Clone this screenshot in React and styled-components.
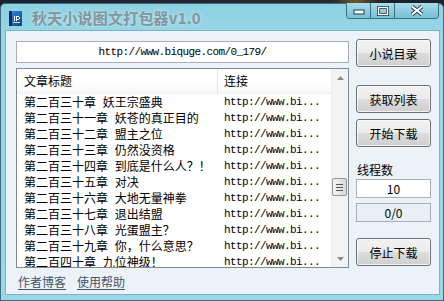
import React from "react";
import styled, { createGlobalStyle } from "styled-components";

const GlobalStyle = createGlobalStyle`
  html, body {
    margin: 0;
    padding: 0;
    background: #1d2430;
  }
  * {
    box-sizing: border-box;
  }
`;

const cjk = `"Noto Sans CJK SC", "Noto Sans", sans-serif`;
const mono = `"Liberation Mono", "DejaVu Sans Mono", monospace`;

const chapters = [
  "第二百三十章 妖王宗盛典",
  "第二百三十一章 妖苍的真正目的",
  "第二百三十二章 盟主之位",
  "第二百三十三章 仍然没资格",
  "第二百三十四章 到底是什么人？！",
  "第二百三十五章 对决",
  "第二百三十六章 大地无量神拳",
  "第二百三十七章 退出结盟",
  "第二百三十八章 光蛋盟主？",
  "第二百三十九章 你，什么意思？",
  "第二百四十章 九位神级！",
];

function AppIcon() {
  return (
    <svg width="13" height="15" viewBox="0 0 13 15">
      <defs>
        <linearGradient id="ic" x1="0" y1="0" x2="1" y2="1">
          <stop offset="0" stopColor="#3a8fd6" />
          <stop offset="1" stopColor="#0d3f86" />
        </linearGradient>
      </defs>
      <rect x="0" y="0" width="13" height="15" fill="url(#ic)" />
      <rect x="0" y="0" width="3" height="15" fill="#0a2f66" />
      <path d="M5 5h1v5h-1z M7 5h3v1h1v2h-1v1h-2v1h-1z M8 6v2h2v-2z" fill="#fff" />
      <rect x="4" y="11" width="7" height="1" fill="#cfe6ff" />
    </svg>
  );
}

function MinGlyph() {
  return (
    <svg width="12" height="8" viewBox="0 0 12 8">
      <rect x="1" y="3" width="10" height="4" fill="#fff" stroke="#203a48" strokeWidth="1" />
    </svg>
  );
}

function MaxGlyph() {
  return (
    <svg width="12" height="10" viewBox="0 0 12 10">
      <rect x="1.5" y="1.5" width="9" height="7" fill="none" stroke="#203a48" strokeWidth="3" />
      <rect x="1.5" y="1.5" width="9" height="7" fill="none" stroke="#fff" strokeWidth="1.4" />
    </svg>
  );
}

function CloseGlyph() {
  return (
    <svg width="14" height="11" viewBox="0 0 14 11">
      <path d="M2 1.5L12 9.5M12 1.5L2 9.5" stroke="#203a48" strokeWidth="4" />
      <path d="M2 1.5L12 9.5M12 1.5L2 9.5" stroke="#fff" strokeWidth="2.2" />
    </svg>
  );
}

function Arrow({ up }) {
  return (
    <svg width="7" height="4" viewBox="0 0 7 4">
      <path d={up ? "M0 4L3.5 0L7 4z" : "M0 0L3.5 4L7 0z"} fill="#8a8a8a" />
    </svg>
  );
}

export default function App() {
  return (
    <>
      <GlobalStyle />
      <Page>
        <Window>
          <TitleBar>
            <IconWrap>
              <AppIcon />
            </IconWrap>
            <Title>秋天小说图文打包器v1.0</Title>
            <Controls>
              <CtrlButton $w={24}>
                <MinGlyph />
              </CtrlButton>
              <CtrlButton $w={24}>
                <MaxGlyph />
              </CtrlButton>
              <CtrlButton $w={44} $last>
                <CloseGlyph />
              </CtrlButton>
            </Controls>
          </TitleBar>
          <Client>
            <LeftColumn>
              <UrlBox>http://www.biquge.com/0_179/</UrlBox>
              <ListBox>
                <ListMain>
                  <Header>
                    <HeaderCell $first>文章标题</HeaderCell>
                    <HeaderCell>连接</HeaderCell>
                  </Header>
                  {chapters.map((c) => (
                    <Row key={c}>
                      <TitleCell>{c}</TitleCell>
                      <LinkCell>http://www.bi...</LinkCell>
                    </Row>
                  ))}
                </ListMain>
                <ScrollBar>
                  <ScrollArrow>
                    <Arrow up />
                  </ScrollArrow>
                  <Track>
                    <Thumb $top={92}>
                      <Grip />
                      <Grip />
                      <Grip />
                    </Thumb>
                  </Track>
                  <ScrollArrow>
                    <Arrow />
                  </ScrollArrow>
                </ScrollBar>
              </ListBox>
              <Links>
                <Link>作者博客</Link>
                <Link>使用帮助</Link>
              </Links>
            </LeftColumn>
            <RightColumn>
              <Button>小说目录</Button>
              <Button $mt={18}>获取列表</Button>
              <Button $mt={6}>开始下载</Button>
              <Label>线程数</Label>
              <Field>10</Field>
              <Field $disabled>0/0</Field>
              <Button $mt={16}>停止下载</Button>
            </RightColumn>
          </Client>
        </Window>
      </Page>
    </>
  );
}

const Page = styled.div`
  width: 444px;
  height: 301px;
  padding-top: 3px;
  background: linear-gradient(90deg, #1b2230 0%, #2a2a30 75%, #6b5a2a 80%, #1b2230 86%);
  overflow: hidden;
`;

const Window = styled.div`
  height: 298px;
  display: flex;
  flex-direction: column;
  border: 1px solid #3e6c7c;
  border-radius: 5px 5px 0 0;
  padding: 0 3px 5px 4px;
  background: linear-gradient(180deg, #8dd1e3 0%, #97d6e7 10%, #9ad7e8 100%);
`;

const TitleBar = styled.div`
  height: 26px;
  display: flex;
  align-items: center;
  padding-left: 4px;
`;

const IconWrap = styled.div`
  width: 13px;
  height: 15px;
  display: flex;
  margin-top: 3px;
`;

const Title = styled.div`
  margin-left: 10px;
  margin-top: 1px;
  font-family: ${cjk};
  font-weight: 700;
  font-size: 15px;
  letter-spacing: 0.2px;
  color: #84959c;
  text-shadow: 0 0 4px rgba(255, 255, 255, 0.5);
`;

const Controls = styled.div`
  margin-left: auto;
  margin-right: 1px;
  margin-top: -1px;
  align-self: flex-start;
  display: flex;
  height: 16px;
  border: 1px solid #3f6f80;
  border-top: none;
  border-radius: 0 0 4px 4px;
  overflow: hidden;
`;

const CtrlButton = styled.div`
  width: ${(p) => p.$w - (p.$last ? 1 : 0)}px;
  height: 15px;
  display: flex;
  align-items: center;
  justify-content: center;
  background: linear-gradient(180deg, #a9dcea 0%, #8fcde0 50%, #79c0d5 100%);
  border-right: ${(p) => (p.$last ? "none" : "1px solid #3f6f80")};
`;

const Client = styled.div`
  flex: 1;
  display: grid;
  grid-template-columns: 333px 75px;
  column-gap: 7px;
  align-items: start;
  padding: 8px 0 0 10px;
  background: #ebf3f9;
  border: 1px solid #7cb3c5;
`;

const LeftColumn = styled.div`
  display: flex;
  flex-direction: column;
`;

const UrlBox = styled.div`
  margin-top: 2px;
  height: 22px;
  border: 1px solid #abadb3;
  background: #fff;
  display: flex;
  align-items: center;
  justify-content: center;
  font-family: ${mono};
  font-size: 11px;
  letter-spacing: -0.6px;
  color: #000;
`;

const ListBox = styled.div`
  margin-top: 5px;
  height: 200px;
  border: 1px solid #828790;
  background: #fff;
  display: flex;
`;

const ListMain = styled.div`
  flex: 1;
  overflow: hidden;
`;

const Header = styled.div`
  height: 25px;
  display: flex;
  background: linear-gradient(180deg, #ffffff 0%, #ffffff 60%, #f6f7f9 100%);
  border-bottom: 1px solid #eef0f2;
`;

const HeaderCell = styled.div`
  width: ${(p) => (p.$first ? "201px" : "auto")};
  flex: ${(p) => (p.$first ? "none" : "1")};
  padding-left: ${(p) => (p.$first ? 7 : 6)}px;
  border-right: 1px solid ${(p) => (p.$first ? "#e2e3e5" : "transparent")};
  line-height: 24px;
  font-family: ${cjk};
  font-size: 12px;
  color: #000;
`;

const Row = styled.div`
  height: 16px;
  display: flex;
  align-items: center;
`;

const TitleCell = styled.div`
  width: 201px;
  padding-left: 7px;
  white-space: nowrap;
  font-family: ${cjk};
  font-size: 12px;
  word-spacing: 4px;
  line-height: 16px;
  color: #000;
`;

const LinkCell = styled.div`
  padding-left: 6px;
  white-space: nowrap;
  font-family: ${mono};
  font-size: 11px;
  letter-spacing: -0.6px;
  line-height: 16px;
  color: #000;
`;

const ScrollBar = styled.div`
  width: 17px;
  display: flex;
  flex-direction: column;
  background: #f3f3f3;
  border-left: 1px solid #ececec;
`;

const ScrollArrow = styled.div`
  height: 17px;
  display: flex;
  align-items: center;
  justify-content: center;
`;

const Track = styled.div`
  flex: 1;
`;

const Thumb = styled.div`
  margin: ${(p) => p.$top}px 1px 0 0;
  height: 18px;
  border: 1px solid #979797;
  border-radius: 2px;
  background: linear-gradient(90deg, #f4f4f4 0%, #e6e6e6 50%, #d9d9d9 100%);
  display: flex;
  flex-direction: column;
  align-items: center;
  justify-content: center;
  gap: 2px;
`;

const Grip = styled.div`
  width: 7px;
  height: 1px;
  background: #555;
`;

const Links = styled.div`
  margin-top: 6px;
  padding-left: 2px;
  display: flex;
  gap: 11px;
`;

const Link = styled.span`
  font-family: ${cjk};
  font-size: 12px;
  line-height: 16px;
  color: #45536a;
  text-decoration: underline;
  text-underline-offset: 2px;
`;

const RightColumn = styled.div`
  display: flex;
  flex-direction: column;
`;

const Button = styled.div`
  margin-top: ${(p) => p.$mt || 0}px;
  height: 28px;
  border: 1px solid #707070;
  border-radius: 3px;
  background: linear-gradient(180deg, #f2f2f2 0%, #ebebeb 49%, #dddddd 50%, #cfcfcf 100%);
  box-shadow: inset 0 0 0 1px rgba(255, 255, 255, 0.7);
  display: flex;
  align-items: center;
  justify-content: center;
  font-family: ${cjk};
  font-size: 12px;
  color: #000;
`;

const Label = styled.div`
  margin-top: 15px;
  padding-left: 1px;
  font-family: ${cjk};
  font-size: 12px;
  line-height: 16px;
  color: #000;
`;

const Field = styled.div`
  margin-top: ${(p) => (p.$disabled ? 5 : 1)}px;
  height: 19px;
  border: 1px solid #abadb3;
  background: ${(p) => (p.$disabled ? "#e8eff6" : "#fff")};
  display: flex;
  align-items: center;
  justify-content: center;
  font-family: ${cjk};
  font-size: 12px;
  color: #000;
`;
